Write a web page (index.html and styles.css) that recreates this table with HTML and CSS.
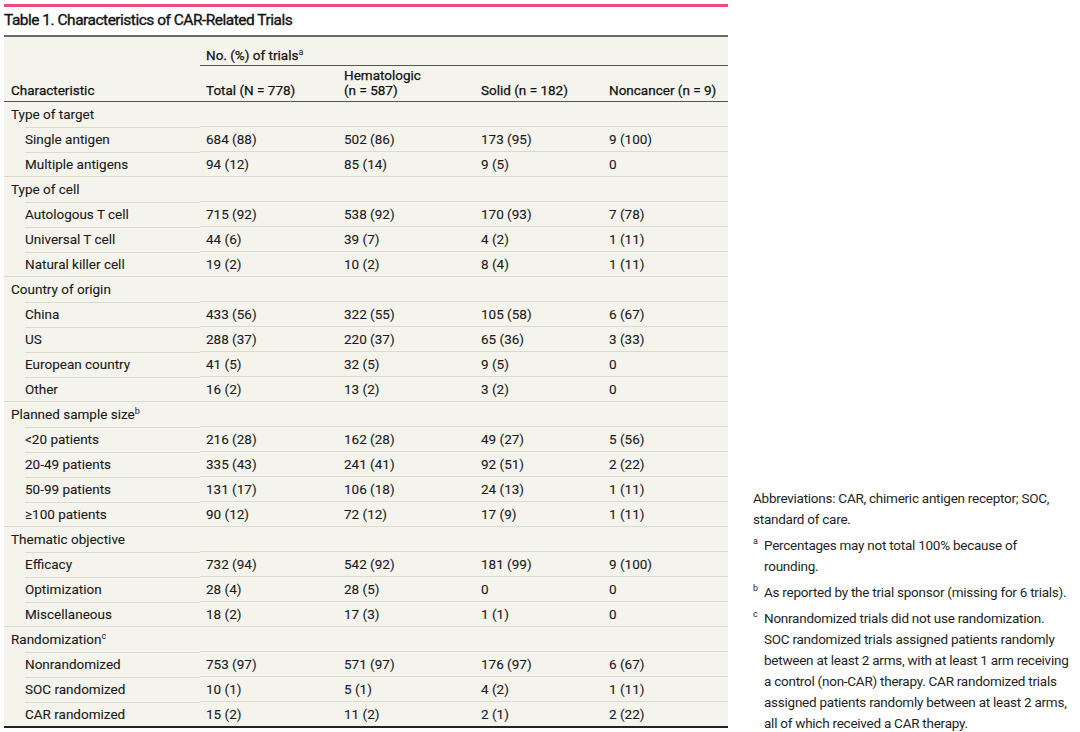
FILE: index.html
```html
<!DOCTYPE html>
<html lang="en">
<head>
<meta charset="utf-8">
<title>Table 1. Characteristics of CAR-Related Trials</title>
<link rel="stylesheet" href="styles.css">
</head>
<body>
<div class="page">
  <div class="main">
    <div class="title">Table 1. Characteristics of CAR-Related Trials</div>
    <table class="data">
      <colgroup>
        <col class="c1"><col class="c2"><col class="c3"><col class="c4"><col class="c5">
      </colgroup>
      <thead>
        <tr class="h1">
          <th></th>
          <th colspan="4" class="span">No. (%) of trials<sup>a</sup></th>
        </tr>
        <tr class="h2">
          <th>Characteristic</th>
          <th>Total (N = 778)</th>
          <th>Hematologic<br>(n = 587)</th>
          <th>Solid (n = 182)</th>
          <th>Noncancer (n = 9)</th>
        </tr>
      </thead>
      <tbody>
        <tr class="grp"><td>Type of target</td><td></td><td></td><td></td><td></td></tr>
        <tr class="sub"><td>Single antigen</td><td>684 (88)</td><td>502 (86)</td><td>173 (95)</td><td>9 (100)</td></tr>
        <tr class="sub"><td>Multiple antigens</td><td>94 (12)</td><td>85 (14)</td><td>9 (5)</td><td>0</td></tr>
        <tr class="grp"><td>Type of cell</td><td></td><td></td><td></td><td></td></tr>
        <tr class="sub"><td>Autologous T cell</td><td>715 (92)</td><td>538 (92)</td><td>170 (93)</td><td>7 (78)</td></tr>
        <tr class="sub"><td>Universal T cell</td><td>44 (6)</td><td>39 (7)</td><td>4 (2)</td><td>1 (11)</td></tr>
        <tr class="sub"><td>Natural killer cell</td><td>19 (2)</td><td>10 (2)</td><td>8 (4)</td><td>1 (11)</td></tr>
        <tr class="grp"><td>Country of origin</td><td></td><td></td><td></td><td></td></tr>
        <tr class="sub"><td>China</td><td>433 (56)</td><td>322 (55)</td><td>105 (58)</td><td>6 (67)</td></tr>
        <tr class="sub"><td>US</td><td>288 (37)</td><td>220 (37)</td><td>65 (36)</td><td>3 (33)</td></tr>
        <tr class="sub"><td>European country</td><td>41 (5)</td><td>32 (5)</td><td>9 (5)</td><td>0</td></tr>
        <tr class="sub"><td>Other</td><td>16 (2)</td><td>13 (2)</td><td>3 (2)</td><td>0</td></tr>
        <tr class="grp"><td>Planned sample size<sup>b</sup></td><td></td><td></td><td></td><td></td></tr>
        <tr class="sub"><td>&lt;20 patients</td><td>216 (28)</td><td>162 (28)</td><td>49 (27)</td><td>5 (56)</td></tr>
        <tr class="sub"><td>20-49 patients</td><td>335 (43)</td><td>241 (41)</td><td>92 (51)</td><td>2 (22)</td></tr>
        <tr class="sub"><td>50-99 patients</td><td>131 (17)</td><td>106 (18)</td><td>24 (13)</td><td>1 (11)</td></tr>
        <tr class="sub"><td>≥100 patients</td><td>90 (12)</td><td>72 (12)</td><td>17 (9)</td><td>1 (11)</td></tr>
        <tr class="grp"><td>Thematic objective</td><td></td><td></td><td></td><td></td></tr>
        <tr class="sub"><td>Efficacy</td><td>732 (94)</td><td>542 (92)</td><td>181 (99)</td><td>9 (100)</td></tr>
        <tr class="sub"><td>Optimization</td><td>28 (4)</td><td>28 (5)</td><td>0</td><td>0</td></tr>
        <tr class="sub"><td>Miscellaneous</td><td>18 (2)</td><td>17 (3)</td><td>1 (1)</td><td>0</td></tr>
        <tr class="grp"><td>Randomization<sup>c</sup></td><td></td><td></td><td></td><td></td></tr>
        <tr class="sub"><td>Nonrandomized</td><td>753 (97)</td><td>571 (97)</td><td>176 (97)</td><td>6 (67)</td></tr>
        <tr class="sub"><td>SOC randomized</td><td>10 (1)</td><td>5 (1)</td><td>4 (2)</td><td>1 (11)</td></tr>
        <tr class="sub"><td>CAR randomized</td><td>15 (2)</td><td>11 (2)</td><td>2 (1)</td><td>2 (22)</td></tr>
      </tbody>
    </table>
  </div>
  <div class="notes">
    <p class="abbr">Abbreviations: CAR, chimeric antigen receptor; SOC,<br>standard of care.</p>
    <p class="fn"><span class="mark">a</span>Percentages may not total 100% because of<br>rounding.</p>
    <p class="fn"><span class="mark">b</span>As reported by the trial sponsor (missing for 6 trials).</p>
    <p class="fn"><span class="mark">c</span>Nonrandomized trials did not use randomization.<br>SOC randomized trials assigned patients randomly<br>between at least 2 arms, with at least 1 arm receiving<br>a control (non-CAR) therapy. CAR randomized trials<br>assigned patients randomly between at least 2 arms,<br>all of which received a CAR therapy.</p>
  </div>
</div>
</body>
</html>
```
FILE: styles.css
```css
html, body {
  margin: 0;
  padding: 0;
  background: #ffffff;
}
body {
  font-family: Roboto, "Liberation Sans", sans-serif;
  color: #1a1a1a;
}
.page {
  display: flex;
  align-items: flex-end;
  height: 732px;
  box-sizing: border-box;
  padding: 4px 0 0 4px;
  gap: 25px;
}
.main {
  width: 724px;
  align-self: flex-start;
  border-top: 3px solid #ee4a7c;
}
.title {
  height: 28px;
  line-height: 26px;
  font-size: 15.5px;
  font-weight: 400;
  letter-spacing: -0.5px;
  -webkit-text-stroke: 0.35px #111;
  color: #111;
  border-bottom: 2px solid #6a6a6a;
}
.data {
  width: 724px;
  table-layout: fixed;
  border-collapse: collapse;
  background: #f4f3ec;
  font-size: 13.5px;
  border-bottom: 2px solid #222;
}
.c1 { width: 196px; }
.c2 { width: 138px; }
.c3 { width: 137px; }
.c4 { width: 128px; }
.c5 { width: 125px; }
th, td {
  padding: 0 0 0 6px;
  text-align: left;
  white-space: nowrap;
}
th {
  font-weight: 400;
  color: #111;
  -webkit-text-stroke: 0.25px #111;
  vertical-align: bottom;
  line-height: 15px;
}
.h1 th { height: 26px; padding-bottom: 2px; }
.h1 th.span { border-bottom: 1.5px solid #555; }
.h2 th { height: 32px; padding-bottom: 3px; border-bottom: 1.5px solid #555; }
.h2 th:first-child { padding-left: 7px; }
td {
  height: 24px;
  line-height: 24px;
  font-weight: 400;
  vertical-align: middle;
  border-top: 1px solid #dcd9cd;
  -webkit-text-stroke: 0.1px #1a1a1a;
}
tbody tr:first-child td { border-top: none; }
.grp td:first-child { padding-left: 7px; }
.sub td:first-child {
  padding-left: 21px;
  border-top: none;
  background: linear-gradient(#dcd9cd, #dcd9cd) no-repeat 21px 0 / calc(100% - 21px) 1px;
}
sup {
  font-size: 9px;
  line-height: 0;
  vertical-align: 5px;
  -webkit-text-stroke: 0;
}
.notes {
  width: 327px;
  margin-bottom: -2px;
  font-size: 13.5px;
  line-height: 21px;
  letter-spacing: -0.25px;
  color: #1f1f1f;
  white-space: nowrap;
}
.notes p { margin: 0 0 5px 0; }
.notes p:last-child { margin-bottom: 0; }
.fn {
  position: relative;
  padding-left: 11px;
}
.mark {
  position: absolute;
  left: 0;
  top: -4px;
  font-size: 9px;
}
```
